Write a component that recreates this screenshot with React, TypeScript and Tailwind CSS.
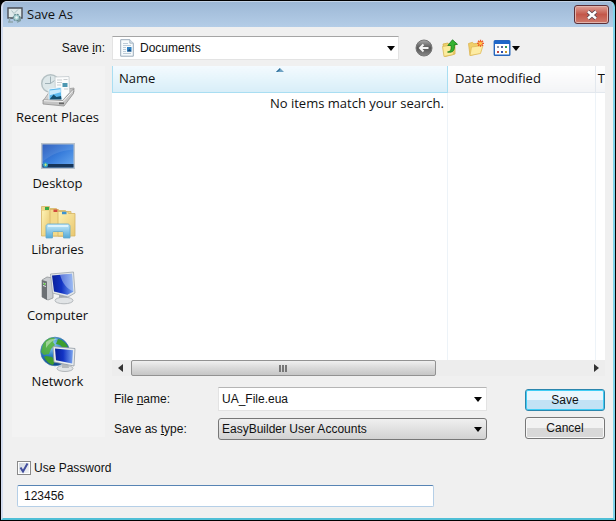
import { useState, ReactNode } from "react";

type Place = {
  label: string;
  icon: ReactNode;
};

function AppIcon() {
  return (
    <svg viewBox="0 0 16 18" className="h-[18px] w-4" aria-hidden="true">
      <path d="M1 2h14v10H1z" fill="#dfe9ea" stroke="#4b4f57" strokeWidth="1.4" />
      <path d="M2.500 12v4M1 16h5" stroke="#8fa5ac" strokeWidth="1.500" />
      <path d="M4.500 4.500l2.500 3 4-4" stroke="#a9bfc2" fill="none" />
      <circle cx="9.500" cy="11.500" r="3.200" fill="#a6cfd0" stroke="#63898f" strokeWidth="1.200" strokeDasharray="2 1" />
      <circle cx="9.500" cy="11.500" r="1.200" fill="#eef6f6" />
      <path d="M11 14l3-4v5l-4 2z" fill="#7e9aa0" />
    </svg>
  );
}

function DocumentIcon() {
  return (
    <svg viewBox="0 0 14 18" className="h-[18px] w-3.5" aria-hidden="true">
      <path d="M.7.7h9.100l3.500 3.500v13H.7z" fill="#f6fafc" stroke="#9aabba" />
      <path d="M9.800.7v3.500h3.500" fill="#dbe6ee" stroke="#9aabba" strokeWidth=".8" />
      <path d="M3 4.500h5M3 6.500h8M3 8.500h3M3 10.500h3M3 12.500h3M3 14.500h8" stroke="#aebfcd" strokeWidth=".8" />
      <rect x="7" y="8" width="4.500" height="4.500" fill="#2d7fc1" />
      <path d="M7 12.500l2.500-2.500 2 2.500z" fill="#194a7a" />
    </svg>
  );
}

function BackIcon() {
  return (
    <svg viewBox="0 0 18 18" className="size-[18px]" aria-hidden="true">
      <defs>
        <linearGradient id="back" x1="0" y1="0" x2="0" y2="1">
          <stop offset="0" stopColor="#aaa" />
          <stop offset=".5" stopColor="#555" />
          <stop offset="1" stopColor="#8a8a8a" />
        </linearGradient>
      </defs>
      <circle cx="9" cy="9" r="8" fill="url(#back)" stroke="#777" strokeWidth="1" />
      <path d="M13.500 9H5.500M8.500 5.500L5 9l3.500 3.500" fill="none" stroke="#f4f4f4" strokeWidth="2" />
    </svg>
  );
}

function UpFolderIcon() {
  return (
    <svg viewBox="0 0 18 18" className="size-[18px]" aria-hidden="true">
      <path d="M2 5l5-1 1 1.500 6-1V15l-10 2.500z" fill="#efd36d" stroke="#d4b04a" strokeWidth=".8" />
      <path d="M1.500 7.500l9-1.500 2 9.500L3 17.500z" fill="#fbeb9c" stroke="#d9b95a" strokeWidth=".8" />
      <path d="M6.500 13c3.500-.5 4-3 3.500-6.500H6.800L11.500.8l5 4.500-3.200.6c.7 5-1.300 8.300-6.800 7.100z" fill="#35b332" stroke="#167a19" strokeWidth=".8" />
    </svg>
  );
}

function NewFolderIcon() {
  return (
    <svg viewBox="0 0 18 18" className="size-[18px]" aria-hidden="true">
      <path d="M1.500 4.500l4-1.200 1.300 1.500 6-1V14l-9.800 2.500z" fill="#f0cf6a" stroke="#dcb452" strokeWidth=".8" />
      <path d="M4.500 8l11.500-1.500-2.500 8-10.500 2z" fill="#fdeca3" stroke="#e0bb5c" strokeWidth=".8" />
      <path d="M13.500.8v7M10 4.300h7M11 1.800l5 5M16 1.800l-5 5" stroke="#ee5a24" strokeWidth="1.300" />
      <circle cx="13.500" cy="4.300" r="1.600" fill="#ffc54a" />
    </svg>
  );
}

function ViewsIcon() {
  return (
    <svg viewBox="0 0 18 18" className="size-[18px]" aria-hidden="true">
      <rect x="1.300" y="1.800" width="15.500" height="14.500" rx=".8" fill="#fff" stroke="#2766bd" strokeWidth="1.400" />
      <path d="M1 2h16v3H1z" fill="#1d67c9" />
      <path d="M4 7h2v2H4z" fill="#8a93a6" />
      <path d="M8 7h2v2H8z" fill="#52659a" />
      <path d="M12 7h2v2h-2z" fill="#2c9b57" />
      <path d="M4 12h2v2H4z" fill="#c04a44" />
      <path d="M8 12h2v2H8z" fill="#2a4fae" />
      <path d="M12 12h2v2h-2z" fill="#c99a2c" />
    </svg>
  );
}

function DownArrow() {
  return (
    <svg viewBox="0 0 8 5" className="h-[5px] w-2" aria-hidden="true">
      <path d="M0 0h8L4 5z" fill="#050505" />
    </svg>
  );
}

function RecentPlacesIcon() {
  return (
    <svg viewBox="0 0 36 36" className="size-9" aria-hidden="true">
      <defs>
        <linearGradient id="tray" x1="0" y1="0" x2="1" y2="1">
          <stop offset="0" stopColor="#f3f3f3" />
          <stop offset="1" stopColor="#8c8c8c" />
        </linearGradient>
      </defs>
      <circle cx="10.500" cy="11.500" r="8.800" fill="#dde7e9" stroke="#b4c0c3" strokeWidth="1.500" />
      <path d="M10.500 4.500v7H5M10.500 11.500l4-3" fill="none" stroke="#9fb0b6" strokeWidth="1" />
      <path d="M3 29l7-10 24-3v4l-10 12z" fill="url(#tray)" stroke="#9a9a9a" strokeWidth=".8" />
      <path d="M15 5l14-.5.5 16-7 8-7-2z" fill="#fbfcfc" stroke="#c2c9cd" strokeWidth=".8" />
      <path d="M17 8h5M23.500 7.500h4M17 10.500h5M17 13h4M24 17h4" stroke="#c8cdd0" />
      <path d="M22.500 11h5v4h-5z" fill="#4d97b1" />
      <path d="M9 17l12-1.500 1 12L9 28z" fill="#5cb9ed" stroke="#e9f5fb" />
      <path d="M9.500 18.500l11-1.300.2 3-11 3z" fill="#c9ebfc" />
      <path d="M9.500 27.500l4-5 3 2.500 4.500-1 .5 3.500z" fill="#154f6e" />
      <path d="M3 28l20 .5L33.500 17v4.500L24 34 3 32z" fill="#c4c4c4" stroke="#909090" strokeWidth=".8" />
      <path d="M4 28.700l19 .8L33 18.500" fill="none" stroke="#f7f7f7" />
      <path d="M19 30.500h5v1.800h-5z" fill="#666" />
    </svg>
  );
}

function DesktopIcon() {
  return (
    <svg viewBox="0 0 36 36" className="size-9" aria-hidden="true">
      <defs>
        <linearGradient id="desk" x1="0" y1="0" x2="1" y2="1">
          <stop offset="0" stopColor="#1c50b8" />
          <stop offset=".5" stopColor="#397edc" />
          <stop offset="1" stopColor="#6aaaf0" />
        </linearGradient>
      </defs>
      <path d="M1 5h34v26H1z" fill="#b9c2cb" />
      <path d="M2.500 6.500h31v23h-31z" fill="url(#desk)" />
      <path d="M2.500 6.500h31v5C22 12 10 17 2.500 24z" fill="#fff" opacity=".1" />
      <path d="M2.500 26h31v3.500h-31z" fill="#173659" />
      <circle cx="5.500" cy="26.800" r="2.600" fill="#2e9cc4" />
      <path d="M4.300 26.800h2.600M5.500 25.500v2.600" stroke="#c8e87a" />
    </svg>
  );
}

function LibrariesIcon() {
  return (
    <svg viewBox="0 0 36 36" className="size-9" aria-hidden="true">
      <defs>
        <linearGradient id="folder" x1="0" y1="0" x2="1" y2="1">
          <stop offset="0" stopColor="#fdf2b4" />
          <stop offset="1" stopColor="#e9c76f" />
        </linearGradient>
        <linearGradient id="stand" x1="0" y1="0" x2="0" y2="1">
          <stop offset="0" stopColor="#c5eafa" />
          <stop offset="1" stopColor="#55a9d6" />
        </linearGradient>
      </defs>
      <path d="M1.500 5.500V2.500h8v2h7v2h9v2h3V32h-27z" fill="#f0d78a" stroke="#d6b564" strokeWidth=".8" />
      <path d="M5 3h4v3H5z" fill="#3ba845" />
      <path d="M10 32V5.500h8.500v2H31V32z" fill="#f3d98a" stroke="#d6b564" strokeWidth=".8" />
      <path d="M13.500 5.500h4v2.500h-4z" fill="#d14a3d" />
      <path d="M18 32V7.500h9.500l1 2H35V32z" fill="url(#folder)" stroke="#d6b564" strokeWidth=".8" />
      <path d="M22 7.800h4.500v2.500H22z" fill="#3d93d1" />
      <path d="M2 7h7v24H2z" fill="url(#folder)" />
      <path d="M6 34V22.500c0-1.500 1-2.500 2.500-2.500h19c1.500 0 2.500 1 2.500 2.500V34h-6.500v-5c0-1-.5-1.500-1.500-1.500h-8c-1 0-1.500.5-1.500 1.500v5z" fill="url(#stand)" stroke="#62a9cf" strokeWidth=".8" />
      <path d="M8 22h20" stroke="#edfaff" strokeWidth="1.500" />
    </svg>
  );
}

function ComputerIcon() {
  return (
    <svg viewBox="0 0 36 36" className="size-9" aria-hidden="true">
      <defs>
        <linearGradient id="screen" x1="0" y1="0" x2="1" y2="0">
          <stop offset="0" stopColor="#0a209a" />
          <stop offset=".45" stopColor="#1233c4" />
          <stop offset="1" stopColor="#7aa4ee" />
        </linearGradient>
      </defs>
      <path d="M2 10l5-3 6 1v20l-5 2-6-3z" fill="#c9cccf" stroke="#8f9396" strokeWidth=".8" />
      <path d="M2 10l5 1.500V30l-5-3z" fill="#6c7074" />
      <path d="M3 13l3 1M3 15.500l3 1" stroke="#e4e7e9" />
      <circle cx="4.500" cy="14" r="1" fill="#62cf44" />
      <path d="M19 24l8 1 1 4-9-1z" fill="#a6abb0" />
      <ellipse cx="24" cy="30.500" rx="9" ry="3.300" fill="#e1e4e6" stroke="#a5aaad" strokeWidth=".8" />
      <path d="M10.500 4l23-2 1.500 21-7 4-15.500-4z" fill="#e2e6e9" stroke="#9ea6ac" strokeWidth=".8" />
      <path d="M12 5.500l20-1.700 1.300 18-6 3L14 21.500z" fill="url(#screen)" />
      <path d="M20 4.800l12-1 1.300 17.500c-6-2-11-8-13.300-16.500z" fill="#c5d9fb" opacity=".45" />
    </svg>
  );
}

function NetworkIcon() {
  return (
    <svg viewBox="0 0 36 36" className="size-9" aria-hidden="true">
      <defs>
        <radialGradient id="globe" cx=".35" cy=".25" r=".8">
          <stop offset="0" stopColor="#a9e0fb" />
          <stop offset=".5" stopColor="#2b7cc6" />
          <stop offset="1" stopColor="#0b3c82" />
        </radialGradient>
      </defs>
      <circle cx="15" cy="15.500" r="14.300" fill="url(#globe)" stroke="#3b77ac" strokeWidth=".7" />
      <path d="M3 8c4-6 8-7 12-6l-2 4 2 3-4 4-2 5-5 1-3-3z" fill="#52b234" opacity=".85" />
      <path d="M18 3c5 1 8 4 10 8l-5 1-3-3-4-1z" fill="#3d9e2d" />
      <path d="M6 20l6 1 3 4-2 4c-4-1-7-4-9-8z" fill="#3f9d2c" />
      <path d="M6 6c3-3 8-4 12-3-5 1-9 4-12 9z" fill="#fff" opacity=".4" />
      <ellipse cx="25" cy="32.500" rx="8" ry="3" fill="#e1e4e6" stroke="#a2a8ac" strokeWidth=".8" />
      <path d="M22 27h6l1 5h-7z" fill="#b3b8bc" />
      <path d="M13 10.500l22 2-1 17.500-20-4z" fill="#e8ecef" stroke="#929ba3" strokeWidth=".8" />
      <path d="M15 12.500l18 1.800-.8 13.200L16 24.300z" fill="url(#screen)" />
    </svg>
  );
}

const places: Place[] = [
  { label: "Recent Places", icon: <RecentPlacesIcon /> },
  { label: "Desktop", icon: <DesktopIcon /> },
  { label: "Libraries", icon: <LibrariesIcon /> },
  { label: "Computer", icon: <ComputerIcon /> },
  { label: "Network", icon: <NetworkIcon /> },
];

const toolbar = [
  { label: "Back", icon: <BackIcon /> },
  { label: "Up one level", icon: <UpFolderIcon /> },
  { label: "Create new folder", icon: <NewFolderIcon /> },
];

function TitleBar() {
  return (
    <header className="flex h-[26px] items-center border-t border-[#c3d3e6] bg-linear-to-b from-[#9db8d6] to-[#b4cde7] pr-1 pl-1">
      <AppIcon />
      <h1 className="ml-1 flex-1 font-['Open_Sans',sans-serif] text-[13px]">Save As</h1>
      <button
        type="button"
        aria-label="Close"
        className="flex h-[19px] w-[35px] items-center justify-center rounded-[3px] border border-[#5c3038] bg-linear-to-b from-[#dda198] via-[#c3574a] to-[#cf7a6c] shadow-[inset_0_0_0_1px_#e2b4ac]"
      >
        <svg viewBox="0 0 12 10" className="h-2.5 w-3" aria-hidden="true">
          <path d="M2 1.500l8 7M10 1.500l-8 7" stroke="#5b4650" strokeWidth="4.200" />
          <path d="M2 1.500l8 7M10 1.500l-8 7" stroke="#fff" strokeWidth="2.400" />
        </svg>
      </button>
    </header>
  );
}

function PlacesBar() {
  return (
    <nav className="mb-[3px] flex flex-col gap-3 bg-[#f3f3f3] pt-1.5 pr-0.5 pb-11 font-['Open_Sans',sans-serif] text-[13px] leading-[18px]">
      {places.map((place) => (
        <button key={place.label} type="button" className="flex flex-col items-center whitespace-nowrap">
          {place.icon}
          <span>{place.label}</span>
        </button>
      ))}
    </nav>
  );
}

function FileList() {
  return (
    <div className="flex flex-1 flex-col font-['Open_Sans',sans-serif] text-[13px]">
      <table className="w-full flex-1 table-fixed border-collapse bg-white">
        <colgroup>
          <col className="w-[68%]" />
          <col className="w-[30%]" />
          <col />
        </colgroup>
        <thead>
          <tr className="h-[26px] text-left">
            <th className="relative border-r border-b border-l border-[#a9def2] bg-linear-to-b from-[#f3fafe] to-[#d8eef8] pl-1.5 font-normal">
              Name
              <svg viewBox="0 0 8 4" className="absolute top-0.5 left-1/2 h-1 w-2 -translate-x-1/2" aria-hidden="true">
                <path d="M0 4l4-4 4 4z" fill="#6fa3c4" />
                <path d="M0 4l4-4v2L1.500 4z" fill="#2f6f9b" />
              </svg>
            </th>
            <th className="border-r border-b border-[#e3e8ee] bg-linear-to-b from-white to-[#f3f4f6] pl-[7px] font-normal">
              Date modified
            </th>
            <th className="overflow-hidden border-b border-[#e3e8ee] bg-linear-to-b from-white to-[#f3f4f6] pl-0.5 font-normal">
              T
            </th>
          </tr>
        </thead>
        <tbody>
          <tr className="align-top">
            <td className="border-r border-[#edf3f8] pt-0.5 pr-[3px] text-right">No items match your search.</td>
            <td className="border-r border-[#edf3f8]" />
            <td />
          </tr>
        </tbody>
      </table>
      <div className="flex h-4 items-center bg-[#ededed] px-1.5">
        <svg viewBox="0 0 5 8" className="h-2 w-[5px]" aria-hidden="true">
          <path d="M5 0v8L0 4z" fill="#333" />
        </svg>
        <div className="mx-2 flex h-full flex-1">
          <div className="flex h-full w-[67%] items-center justify-center gap-px rounded-xs border border-[#929292] bg-linear-to-b from-[#f0f0f0] via-[#d9d9d9] to-[#c6c6c6]">
            <i className="h-[7px] w-0.5 bg-[#777]" />
            <i className="h-[7px] w-0.5 bg-[#777]" />
            <i className="h-[7px] w-0.5 bg-[#777]" />
          </div>
        </div>
        <svg viewBox="0 0 5 8" className="h-2 w-[5px]" aria-hidden="true">
          <path d="M0 0v8l5-4z" fill="#333" />
        </svg>
      </div>
    </div>
  );
}

export default function App() {
  const [fileName, setFileName] = useState("UA_File.eua");
  const [usePassword, setUsePassword] = useState(true);
  const [password, setPassword] = useState("123456");

  return (
    <div className="flex min-h-screen flex-col bg-black p-px font-['Liberation_Sans',Arial,sans-serif] text-xs text-[#111]">
      <form
        onSubmit={(e) => e.preventDefault()}
        className="flex flex-1 flex-col overflow-hidden rounded-t-md border-r-2 border-b-2 border-l-2 border-r-[#7fd3ea] border-b-[#4fbfd6] border-l-[#d3dcee] bg-[#f0f0f0]"
      >
        <TitleBar />

        <div className="grid flex-1 grid-cols-[93px_1fr] grid-rows-[24px_1fr] gap-x-[7px] gap-y-1.5 pt-[9px] pr-2 pl-[9px]">
          <label htmlFor="saveIn" className="self-center text-right">
            Save <u>i</u>n:
          </label>
          <div className="mr-[85px] flex items-center">
            <div className="relative flex h-6 flex-1 items-center">
              <select
                id="saveIn"
                className="h-6 w-full appearance-none border border-[#e3e3e3] border-t-[#a5a5a5] bg-white pl-[27px]"
              >
                <option>Documents</option>
              </select>
              <span className="pointer-events-none absolute left-2">
                <DocumentIcon />
              </span>
              <span className="pointer-events-none absolute right-1">
                <DownArrow />
              </span>
            </div>
            <div className="ml-4 flex items-center gap-2">
              {toolbar.map((item) => (
                <button key={item.label} type="button" aria-label={item.label}>
                  {item.icon}
                </button>
              ))}
              <button type="button" aria-label="View menu" className="flex items-center gap-px">
                <ViewsIcon />
                <DownArrow />
              </button>
            </div>
          </div>

          <PlacesBar />

          <div className="flex flex-col">
            <FileList />
            <div className="mt-[11px] flex gap-[38px]">
              <div className="grid flex-1 grid-cols-[106px_1fr] items-center gap-y-[7px]">
                <label htmlFor="fileName" className="pl-0.5">
                  File <u>n</u>ame:
                </label>
                <div className="flex h-6 items-center border border-[#e3e3e3] border-t-[#b5b5b5] bg-white pr-1">
                  <input
                    id="fileName"
                    type="text"
                    value={fileName}
                    onChange={(e) => setFileName(e.target.value)}
                    className="min-w-0 flex-1 pl-[3px] outline-none"
                  />
                  <button type="button" aria-label="Recent file names">
                    <DownArrow />
                  </button>
                </div>
                <label htmlFor="fileType" className="pl-0.5">
                  Save as <u>t</u>ype:
                </label>
                <div className="relative flex h-[22px] items-center">
                  <select
                    id="fileType"
                    className="h-full w-full appearance-none rounded-[3px] border border-[#777] bg-linear-to-b from-[#f0f0f0] to-[#d2d2d2] pl-[3px]"
                  >
                    <option>EasyBuilder User Accounts</option>
                  </select>
                  <span className="pointer-events-none absolute right-[5px]">
                    <DownArrow />
                  </span>
                </div>
              </div>
              <div className="mt-0.5 flex w-20 flex-col gap-1.5">
                <button
                  type="submit"
                  className="h-[22px] rounded-[3px] border border-[#2b86ad] bg-linear-to-b from-[#e9f6fd] from-50% to-[#c1e2f5] to-50% shadow-[inset_0_0_0_1px_#3fcdf5]"
                >
                  Save
                </button>
                <button
                  type="button"
                  className="h-[22px] rounded-[3px] border border-[#777] bg-linear-to-b from-[#f2f2f2] from-50% to-[#d8d8d8] to-50% shadow-[inset_0_0_0_1px_#f8f8f8]"
                >
                  Cancel
                </button>
              </div>
            </div>
          </div>
        </div>

        <div className="mt-5 mb-[11px] flex flex-col gap-[9px] pl-3.5">
          <label className="relative flex h-4 items-center gap-[3px] self-start">
            <input
              type="checkbox"
              checked={usePassword}
              onChange={(e) => setUsePassword(e.target.checked)}
              className="size-3.5 appearance-none border border-[#8a8a8a] bg-linear-to-br from-[#cfd6df] to-[#f4f6f8] shadow-[inset_0_0_0_1px_#fff]"
            />
            {usePassword && (
              <svg viewBox="0 0 14 14" className="pointer-events-none absolute left-0 size-3.5" aria-hidden="true">
                <path d="M3.500 6.500l2.500 4 4.500-8" fill="none" stroke="#414d9d" strokeWidth="2" />
              </svg>
            )}
            Use Password
          </label>
          <input
            type="text"
            aria-label="Password"
            value={password}
            onChange={(e) => setPassword(e.target.value)}
            className="h-[22px] w-[70%] rounded-xs border border-[#b5cfe7] border-t-[#5784b4] bg-white px-1.5"
          />
        </div>
      </form>
    </div>
  );
}
